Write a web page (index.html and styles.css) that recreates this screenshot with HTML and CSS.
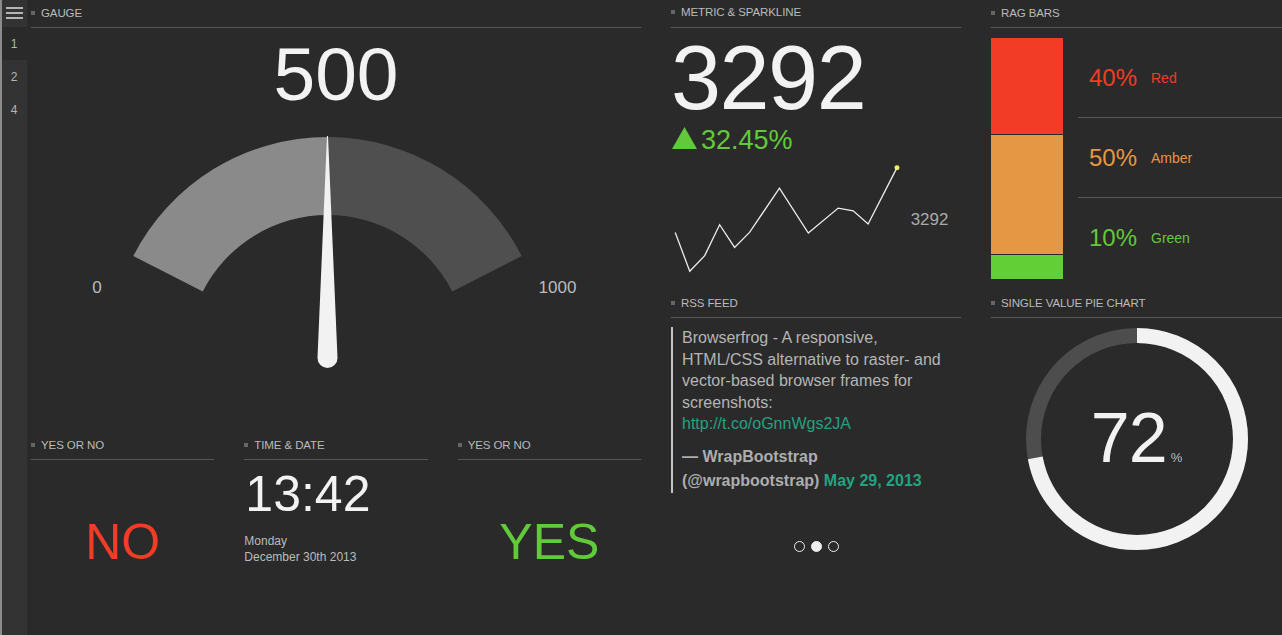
FILE: index.html
```html
<!DOCTYPE html>
<html lang="en">
<head>
<meta charset="utf-8">
<title>Dashboard</title>
<link rel="stylesheet" href="styles.css">
</head>
<body>
<div class="app">
  <nav class="side">
    <div class="burger"><span></span><span></span><span></span></div>
    <a class="num active">1</a>
    <a class="num">2</a>
    <a class="num">4</a>
  </nav>

  <main class="dash">
    <!-- left column -->
    <div class="col">
      <section class="widget gauge-w">
        <header class="wh"><i class="bullet"></i>Gauge</header>
        <div class="gauge-val">500</div>
        <svg class="gauge-svg" width="610" height="321" viewBox="0 0 610 321">
          <path d="M 102.26 145.03 A 218 218 0 0 1 296.5 26 L 296.5 104 A 140 140 0 0 0 171.76 180.44 Z" fill="#8a8a8a"/>
          <path d="M 296.5 26 A 218 218 0 0 1 490.74 145.03 L 421.24 180.44 A 140 140 0 0 0 296.5 104 Z" fill="#4f4f4f"/>
          <path d="M 296 25 L 297 25 L 306.5 247 A 10 10 0 0 1 286.5 247 Z" fill="#f2f2f2"/>
          <text x="66" y="182" class="g-lbl" text-anchor="middle">0</text>
          <text x="526.5" y="182" class="g-lbl" text-anchor="middle">1000</text>
        </svg>
      </section>
      <div class="row3">
        <section class="widget">
          <header class="wh"><i class="bullet"></i>Yes or No</header>
          <div class="yn no">NO</div>
        </section>
        <section class="widget">
          <header class="wh"><i class="bullet"></i>Time &amp; Date</header>
          <div class="time">13:42</div>
          <div class="date">Monday<br>December 30th 2013</div>
        </section>
        <section class="widget">
          <header class="wh"><i class="bullet"></i>Yes or No</header>
          <div class="yn yes">YES</div>
        </section>
      </div>
    </div>

    <!-- middle column -->
    <div class="col">
      <section class="widget top">
        <header class="wh"><i class="bullet"></i>Metric &amp; Sparkline</header>
        <div class="metric">3292</div>
        <div class="change">
          <svg width="25" height="22" viewBox="0 0 25 22"><polygon points="12.5,0 25,22 0,22" fill="#62c93a"/></svg>
          <span>32.45%</span>
        </div>
        <svg class="spark" width="290" height="136" viewBox="0 0 290 136">
          <polyline fill="none" stroke="#eeeeee" stroke-width="1.3" stroke-linejoin="miter" points="3.7,77.7 18.3,116.7 33.3,101 48.3,70 63.3,92.7 78.3,77.7 108.3,33.3 137.3,78.3 167.3,53.3 182.3,56 197.3,69.3 226.3,12.7"/>
          <circle cx="226.3" cy="12.7" r="2.5" fill="#f3ee6a"/>
          <text x="240" y="70" class="s-lbl">3292</text>
        </svg>
      </section>
      <section class="widget">
        <header class="wh"><i class="bullet"></i>RSS Feed</header>
        <blockquote class="tweet">
          <p class="tw-text">Browserfrog - A responsive,<br>HTML/CSS alternative to raster- and<br>vector-based browser frames for<br>screenshots:<br><a class="lnk">http://t.co/oGnnWgs2JA</a></p>
          <p class="tw-by">— WrapBootstrap<br>(@wrapbootstrap) <a class="lnk">May 29, 2013</a></p>
        </blockquote>
        <div class="dots"><span class="dot"></span><span class="dot on"></span><span class="dot"></span></div>
      </section>
    </div>

    <!-- right column -->
    <div class="col">
      <section class="widget top">
        <header class="wh"><i class="bullet"></i>RAG Bars</header>
        <div class="rag">
          <div class="rag-bar">
            <div class="seg red" style="flex:40"></div>
            <div class="seg amber" style="flex:50"></div>
            <div class="seg green" style="flex:10"></div>
          </div>
          <div class="rag-list">
            <div class="rag-row red-t"><span class="pct">40%</span><span class="lab">Red</span></div>
            <div class="rag-row amber-t"><span class="pct">50%</span><span class="lab">Amber</span></div>
            <div class="rag-row green-t"><span class="pct">10%</span><span class="lab">Green</span></div>
          </div>
        </div>
      </section>
      <section class="widget">
        <header class="wh"><i class="bullet"></i>Single Value Pie Chart</header>
        <div class="pie">
          <svg width="222" height="222" viewBox="0 0 222 222">
            <circle cx="111" cy="111" r="103.5" fill="none" stroke="#4d4d4d" stroke-width="15"/>
            <circle cx="111" cy="111" r="103.5" fill="none" stroke="#f2f2f2" stroke-width="15" stroke-dasharray="468.2 650.3" transform="rotate(-90 111 111)"/>
          </svg>
          <div class="pie-val"><span class="pv">72</span><span class="pp">%</span></div>
        </div>
      </section>
    </div>
  </main>
</div>
</body>
</html>
```

FILE: styles.css
```css
html, body {
  margin: 0;
  padding: 0;
  background: #2a2a2a;
  height: 635px;
  overflow: hidden;
}

body {
  font-family: "Liberation Sans", Arial, Helvetica, sans-serif;
  color: #bbbbbb;
}

.app {
  display: flex;
  height: 635px;
}

/* sidebar */
.side {
  width: 25px;
  border-left: 2px solid #8c8c8c;
  background: #333333;
  display: flex;
  flex-direction: column;
  flex-shrink: 0;
}

.burger {
  height: 27px;
  box-sizing: border-box;
  padding: 7px 0 0 4px;
  display: flex;
  flex-direction: column;
  gap: 3px;
}

.burger span {
  display: block;
  width: 17px;
  height: 2px;
  background: #b5b5b5;
}

.num {
  height: 33px;
  display: flex;
  align-items: center;
  justify-content: center;
  font-size: 12px;
  color: #b5b5b5;
  padding-right: 1px;
}

.num.active {
  background: #2a2a2a;
}

/* main grid */
.dash {
  padding-left: 4px;
  display: grid;
  grid-template-columns: 610px 290px 291px;
  column-gap: 30px;
  align-items: start;
}

.col {
  display: flex;
  flex-direction: column;
}

.widget {
  display: flex;
  flex-direction: column;
}

.widget.top {
  height: 290px;
}

.wh {
  height: 25px;
  padding-bottom: 2px;
  border-bottom: 1px solid #575757;
  display: flex;
  align-items: center;
  font-size: 11.5px;
  text-transform: uppercase;
  color: #bababa;
  letter-spacing: -0.1px;
  white-space: nowrap;
}

.bullet {
  display: inline-block;
  width: 4px;
  height: 4px;
  background: #666666;
  margin-right: 6px;
}

/* gauge */
.gauge-w {
  height: 432px;
}

.gauge-val {
  margin-top: 9px;
  height: 74px;
  font-size: 75px;
  line-height: 74px;
  text-align: center;
  color: #f2f2f2;
}

.gauge-svg {
  display: block;
}

.g-lbl {
  font-family: "Liberation Sans", Arial, sans-serif;
  font-size: 17px;
  fill: #bbbbbb;
}

/* bottom row */
.row3 {
  display: grid;
  grid-template-columns: repeat(3, 1fr);
  column-gap: 30px;
}

.yn {
  margin-top: 57px;
  font-size: 50px;
  line-height: 50px;
  text-align: center;
}

.no { color: #f23c26; }
.yes { color: #62c93a; }

.time {
  margin-top: 8px;
  padding-left: 1px;
  font-size: 50px;
  line-height: 52px;
  color: #f2f2f2;
}

.date {
  margin-top: 13px;
  font-size: 12px;
  line-height: 16px;
  color: #bbbbbb;
}

/* metric */
.metric {
  margin-top: 7px;
  height: 89px;
  font-size: 90px;
  line-height: 86px;
  color: #f2f2f2;
  letter-spacing: -1.5px;
  overflow: visible;
}

.change {
  margin-top: 3px;
  height: 28px;
  display: flex;
  align-items: flex-start;
  gap: 4px;
  padding-left: 1px;
  color: #62c93a;
  font-size: 27px;
  line-height: 26px;
}

.change svg {
  display: block;
}

.spark {
  display: block;
}

.s-lbl {
  font-family: "Liberation Sans", Arial, sans-serif;
  font-size: 17px;
  fill: #aaaaaa;
}

/* rss */
.tweet {
  margin: 9px 0 0 0;
  border-left: 2px solid #c4c4c4;
  padding-left: 9px;
  font-size: 16px;
  color: #b5b5b5;
  white-space: nowrap;
}

.tw-text {
  margin: 0;
  line-height: 21.5px;
}

.tw-by {
  margin: 10px 0 0 0;
  line-height: 24px;
  font-weight: bold;
  color: #adadad;
}

.lnk {
  color: #22a381;
  text-decoration: none;
}

.dots {
  margin-top: 48px;
  display: flex;
  justify-content: center;
  gap: 6px;
}

.dot {
  width: 11px;
  height: 11px;
  border-radius: 50%;
  border: 1.5px solid #eeeeee;
  box-sizing: border-box;
}

.dot.on {
  background: #eeeeee;
}

/* rag */
.rag {
  margin-top: 10px;
  display: flex;
}

.rag-bar {
  width: 72px;
  height: 241px;
  display: flex;
  flex-direction: column;
  gap: 1px;
  flex-shrink: 0;
}

.seg.red { background: #f23c26; }
.seg.amber { background: #e69743; }
.seg.green { background: #63cf37; }

.rag-list {
  flex: 1;
  margin-left: 15px;
}

.rag-row {
  height: 79px;
  display: flex;
  align-items: center;
  padding-left: 11px;
}

.rag-row + .rag-row {
  border-top: 1px solid #575757;
}

.pct {
  width: 62px;
  font-size: 24px;
}

.lab {
  font-size: 14px;
}

.red-t { color: #f23c26; }
.amber-t { color: #e69743; }
.green-t { color: #62c93a; }

/* pie */
.pie {
  position: relative;
  width: 222px;
  height: 222px;
  margin: 10px auto 0;
}

.pie svg {
  display: block;
}

.pie-val {
  position: absolute;
  inset: 0;
  display: flex;
  align-items: baseline;
  justify-content: center;
  padding-top: 75px;
  box-sizing: border-box;
}

.pv {
  font-size: 70px;
  line-height: 70px;
  color: #f2f2f2;
  letter-spacing: -1px;
}

.pp {
  font-size: 13px;
  margin-left: 4px;
  color: #bbbbbb;
}
```
